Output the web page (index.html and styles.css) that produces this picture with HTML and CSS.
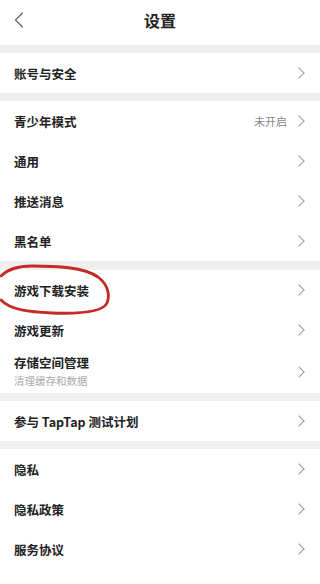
FILE: index.html
```html
<!DOCTYPE html>
<html lang="zh-CN">
<head>
    <meta charset="UTF-8">
    <meta name="viewport" content="width=device-width, initial-scale=1.0">
    <title>设置</title>
    <link rel="stylesheet" href="styles.css">
</head>
<body>
    <div class="header">
        <svg class="back" width="10" height="16" viewBox="0 0 10 16">
            <polyline points="8.5,1 1.5,8 8.5,15" fill="none" stroke="#666" stroke-width="1.3" stroke-linecap="round" stroke-linejoin="round"/>
        </svg>
        <h1>设置</h1>
    </div>

    <div class="group">
        <div class="row"><span class="label">账号与安全</span><span class="arrow"></span></div>
    </div>

    <div class="group">
        <div class="row"><span class="label">青少年模式</span><span class="value">未开启</span><span class="arrow"></span></div>
        <div class="row"><span class="label">通用</span><span class="arrow"></span></div>
        <div class="row"><span class="label">推送消息</span><span class="arrow"></span></div>
        <div class="row"><span class="label">黑名单</span><span class="arrow"></span></div>
    </div>

    <div class="group marked">
        <div class="row"><span class="label">游戏下载安装</span><span class="arrow"></span></div>
        <div class="row"><span class="label">游戏更新</span><span class="arrow"></span></div>
        <div class="row tall">
            <div class="texts">
                <span class="label">存储空间管理</span>
                <span class="sub">清理缓存和数据</span>
            </div>
            <span class="arrow"></span>
        </div>
        <!-- hand drawn red mark around the first row -->
        <svg class="mark" width="116" height="56" viewBox="0 0 116 56">
            <path d="M1 13 C8 6 18 3 32 3 C56 3 84 4 98 14 C106 20 111 30 107 40 C103 49 80 51 52 50 C30 49 10 47 1 37"
                  fill="none" stroke="#c62a26" stroke-width="2.8" stroke-linecap="round"/>
        </svg>
    </div>

    <div class="group">
        <div class="row"><span class="label">参与 TapTap 测试计划</span><span class="arrow"></span></div>
    </div>

    <div class="group last">
        <div class="row"><span class="label">隐私</span><span class="arrow"></span></div>
        <div class="row"><span class="label">隐私政策</span><span class="arrow"></span></div>
        <div class="row"><span class="label">服务协议</span><span class="arrow"></span></div>
    </div>
</body>
</html>
```

FILE: styles.css
```css
body {
    margin: 0;
    padding: 0;
    background-color: #efefef;
    font-family: "Noto Sans CJK SC", "Noto Sans", sans-serif;
    color: #222;
}

.header {
    height: 45px;
    box-sizing: border-box;
    padding-top: 8px;
    background-color: #fff;
    display: flex;
    justify-content: center;
    align-items: flex-start;
    position: relative;
}

.header h1 {
    margin: 0;
    font-size: 16px;
    line-height: 24px;
    font-weight: bold;
    color: #222;
}

.back {
    position: absolute;
    left: 14px;
    top: 12px;
}

.group {
    background-color: #fff;
    margin-top: 8px;
    position: relative;
}

.group.marked {
    margin-top: 9px;
}

.group.last {
    padding-bottom: 20px;
}

.row {
    height: 40px;
    display: flex;
    align-items: center;
    padding: 0 14px;
}

.row.tall {
    height: 43px;
}

.label {
    font-size: 12.5px;
    font-weight: bold;
    flex: 1;
}

.texts {
    flex: 1;
    display: flex;
    flex-direction: column;
    line-height: 18px;
}

.sub {
    font-size: 10.5px;
    color: #aaa;
}

.value {
    font-size: 11px;
    color: #888;
    margin-right: 8px;
}

.arrow {
    width: 7px;
    height: 7px;
    border-top: 1.3px solid #999;
    border-right: 1.3px solid #999;
    transform: rotate(45deg);
    margin-right: 3px;
}

.mark {
    position: absolute;
    left: 0;
    top: -7px;
}
```
